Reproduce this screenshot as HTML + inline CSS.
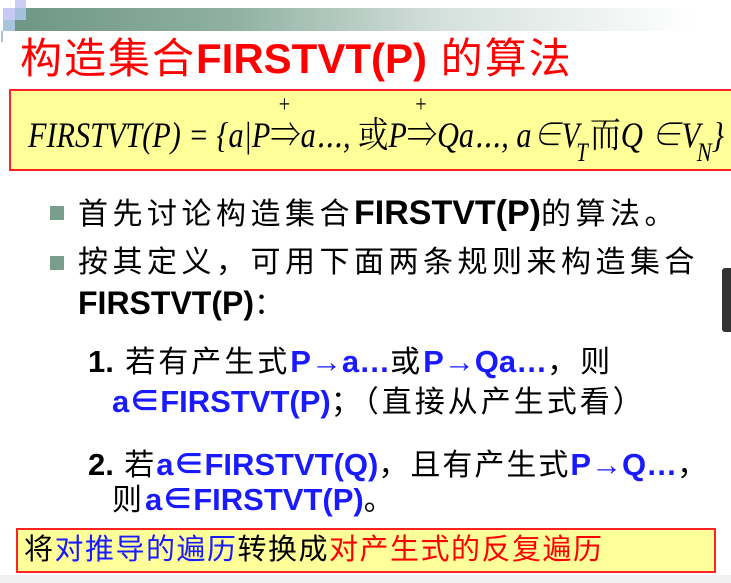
<!DOCTYPE html><html><head><meta charset="utf-8"><style>
body{margin:0;width:731px;height:583px;background:#fff;position:relative;overflow:hidden;font-family:"Liberation Sans","Noto Sans CJK SC",sans-serif;}
.a{position:absolute;white-space:nowrap;}
.t{font-size:30px;color:#000;letter-spacing:4.5px;line-height:34px;}
.b{font-weight:bold;letter-spacing:0;font-size:34px}
.bl{color:#1a1aff;font-weight:bold;letter-spacing:0;font-size:31px}
.r{color:#f00}
.m{font-family:"Liberation Serif","Noto Serif CJK SC",serif;font-style:italic;font-size:36px;transform:scaleX(0.855);transform-origin:0 0;line-height:46px}
.ar{position:relative;font-style:normal;display:inline-block}
.ar i{position:absolute;left:10px;top:-30px;font-style:normal;font-size:24px}
.s{font-size:26px;position:relative;top:14px;margin-left:-4px}
</style></head><body>
<div class="a" style="left:15px;top:8px;width:716px;height:23px;background:linear-gradient(90deg,#6e9685 0%,#8fb0a3 30%,#d5e1dc 60%,#fff 95%)"></div>
<div class="a" style="left:15px;top:0;width:11px;height:8px;background:#ccccf5"></div>
<div class="a" style="left:3px;top:8px;width:12px;height:12px;background:#c8c8f4"></div>
<div class="a" style="left:15px;top:8px;width:11px;height:12px;background:#a5c0dc"></div>
<div class="a" style="left:3px;top:20px;width:12px;height:11px;background:#a7c4da"></div>
<div class="a" style="left:1px;top:31px;width:2px;height:11px;background:#a9c3dc"></div>
<div class="a r" style="left:20px;top:34px;font-size:42px;line-height:50px;letter-spacing:2px">构造集合<b style="letter-spacing:0">FIRSTVT(P)</b> 的算法</div>
<div class="a" style="left:9px;top:89px;width:730px;height:82px;background:#ffff99;border:2px solid #f22;box-sizing:border-box"></div>
<div class="a m" style="left:28px;top:112px;transform:scaleX(0.84)">FIRSTVT(P) = {a|P<span class="ar">⇒<i>+</i></span>a⋯, <span style="font-style:normal">或</span>P<span class="ar">⇒<i>+</i></span>Qa⋯, a</div>
<div class="a m" style="left:533px;top:112px;transform:scaleX(0.8)">∈V<span class="s">T</span></div>
<div class="a m" style="left:590px;top:112px;"><span style="font-style:normal">而</span>Q ∈V<span class="s">N</span>}</div>
<div class="a" style="left:50px;top:206px;width:14px;height:14px;background:#7a9e8e"></div>
<div class="a" style="left:50px;top:256px;width:14px;height:14px;background:#7a9e8e"></div>
<div class="a t" style="left:78px;top:196px">首先讨论构造集合<span class="b">FIRSTVT(P)</span>的算法。</div>
<div class="a t" style="left:78px;top:246px">按其定义，可用下面两条规则来构造集合</div>
<div class="a t" style="left:78px;top:286px"><span class="b" style="font-size:32px">FIRSTVT(P)</span>：</div>
<div class="a t" style="left:88px;top:345px;letter-spacing:3px"><span class="b" style="font-size:31px">1.</span> 若有产生式<span class="bl">P→a…</span>或<span class="bl">P→Qa…</span>，则</div>
<div class="a t" style="left:112px;top:385px;letter-spacing:3px"><span class="bl">a∈FIRSTVT(P)</span>；（直接从产生式看）</div>
<div class="a t" style="left:88px;top:448px;letter-spacing:2px"><span class="b" style="font-size:31px">2.</span> 若<span class="bl">a∈FIRSTVT(Q)</span>，且有产生式<span class="bl">P→Q…</span>，</div>
<div class="a t" style="left:112px;top:483px;letter-spacing:3px">则<span class="bl">a∈FIRSTVT(P)</span>。</div>
<div class="a" style="left:16px;top:528px;width:700px;height:45px;background:#ffff99;border:2px solid #f22;box-sizing:border-box"></div>
<div class="a t" style="left:24px;top:533px;font-size:29px;letter-spacing:1.5px">将<span style="color:#1a1aff">对推导的遍历</span>转换成<span class="r">对产生式的反复遍历</span></div>
<div class="a" style="left:722px;top:268px;width:9px;height:64px;background:#333;border-radius:3px 0 0 3px"></div>
<div class="a" style="left:0;top:575px;width:731px;height:8px;background:#f0f0f0"></div>
</body></html>
